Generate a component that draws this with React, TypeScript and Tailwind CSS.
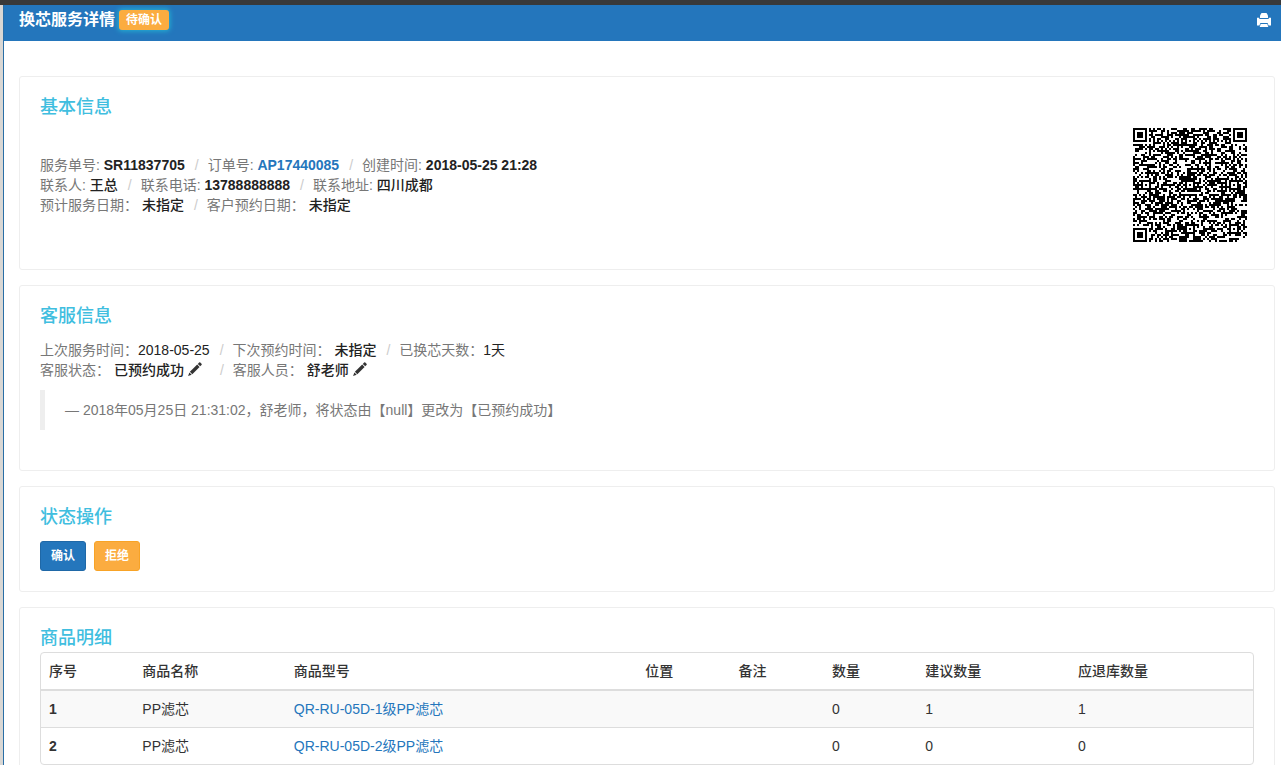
import type { ReactNode } from "react";

type Product = {
  id: number;
  name: string;
  model: string;
  position: string;
  remark: string;
  quantity: number;
  suggested: number;
  returned: number;
};

const products: Product[] = [
  { id: 1, name: "PP滤芯", model: "QR-RU-05D-1级PP滤芯", position: "", remark: "", quantity: 0, suggested: 1, returned: 1 },
  { id: 2, name: "PP滤芯", model: "QR-RU-05D-2级PP滤芯", position: "", remark: "", quantity: 0, suggested: 0, returned: 0 },
];

const columns = [
  { label: "序号", width: "w-[7.7%]" },
  { label: "商品名称", width: "w-[12.5%]" },
  { label: "商品型号", width: "w-[29%]" },
  { label: "位置", width: "w-[7.7%]" },
  { label: "备注", width: "w-[7.7%]" },
  { label: "数量", width: "w-[7.7%]" },
  { label: "建议数量", width: "w-[12.6%]" },
  { label: "应退库数量", width: "" },
];

// --- QR code -------------------------------------------------------

const QR_SIZE = 57;

// Square rings used by the finder and alignment marks
function ring(x: number, y: number, cx: number, cy: number) {
  return Math.max(Math.abs(x - cx), Math.abs(y - cy));
}

function buildQrPath() {
  const last = QR_SIZE - 4;
  const finders = [[3, 3], [last, 3], [3, last]];
  const aligns = [[28, 6], [6, 28], [28, 28], [50, 28], [28, 50], [50, 50]];
  let seed = 11837705;
  let path = "";

  for (let y = 0; y < QR_SIZE; y++) {
    for (let x = 0; x < QR_SIZE; x++) {
      seed ^= seed << 13;
      seed ^= seed >>> 17;
      seed ^= seed << 5;
      let dark = (seed >>> 0) % 100 < 52;
      if (x === 6 || y === 6) dark = (x + y) % 2 === 0;
      for (const [cx, cy] of aligns) {
        const r = ring(x, y, cx, cy);
        if (r <= 2) dark = r !== 1;
      }
      for (const [cx, cy] of finders) {
        const r = ring(x, y, cx, cy);
        if (r <= 4) dark = r !== 2 && r !== 4;
      }
      if (dark) path += `M${x} ${y}h1v1h-1z`;
    }
  }
  return path;
}

const qrPath = buildQrPath();

function QrCode() {
  return (
    <svg
      viewBox={`0 0 ${QR_SIZE} ${QR_SIZE}`}
      className="m-[7px] size-[114px]"
      shapeRendering="crispEdges"
      role="img"
      aria-label="二维码"
    >
      <path d={qrPath} fill="#000" />
    </svg>
  );
}

// --- Icons ---------------------------------------------------------

function PencilIcon() {
  return (
    <svg viewBox="0 0 14 14" className="inline-block size-3.5 align-[-1px]" fill="#333" aria-hidden="true">
      <path d="M11.1.6a.9.9 0 0 1 1.2 0l1.2 1.2a.9.9 0 0 1 0 1.2l-1.3 1.3-2.4-2.4z" />
      <path d="M9.2 2.5l2.4 2.4-7.3 7.3-2.4-2.4z" />
      <path d="M1.4 10.5l2.3 2.3L.1 14z" />
    </svg>
  );
}

function PrintIcon() {
  return (
    <svg viewBox="0 0 14 14" className="size-3.5" fill="#fff" aria-hidden="true">
      <path d="M4.500 0h5L11 2.500V5H3V2.500z" />
      <path d="M0 4.700h2.300V6h9.400V4.700H14V12.500h-2.400L10.600 10H3.400l-1 2.500H0z" />
      <path d="M3.700 11h6.600l1 3H2.700z" />
    </svg>
  );
}

// --- Building blocks -----------------------------------------------

function Card({ title, children }: { title: string; children: ReactNode }) {
  return (
    <section className="rounded-[3px] border border-[#eee] p-5">
      <h2 className="text-lg leading-5 font-medium text-[#40bedf]">{title}</h2>
      {children}
    </section>
  );
}

function Row({ children }: { children: ReactNode }) {
  return <ul className="flex flex-wrap text-[#777]">{children}</ul>;
}

function Item({ label, children }: { label: string; children: ReactNode }) {
  return (
    <li className="whitespace-pre before:pr-[9px] before:pl-2.5 before:text-[#ccc] before:content-['/'] first:before:content-none">
      {label}
      {children}
    </li>
  );
}

function Value({ bold = false, children }: { bold?: boolean; children: ReactNode }) {
  return <span className={bold ? "font-bold text-[#222]" : "font-medium text-[#222]"}>{children}</span>;
}

export default function App() {
  return (
    <div
      lang="zh-CN"
      className="flex min-h-screen border-t-[5px] border-[#393939] bg-[#d9d7d4] pl-[3px] font-['Liberation_Sans','Noto_Sans_CJK_SC',sans-serif] text-sm leading-5 text-[#333]"
    >
      <div className="min-w-0 flex-1 border-l border-[#2a6ea6] bg-white">
        <header className="flex h-9 items-start justify-between bg-[#2476bc] pr-2.5 pl-[15px]">
          <div className="flex items-center gap-1 pt-[5px]">
            <h1 className="text-base leading-5 font-bold text-white">换芯服务详情</h1>
            <span className="rounded-[3px] bg-[#fbac40] px-[7px] text-xs leading-5 font-bold text-white shadow-[0_0_5px_1px_#23b2d4]">
              待确认
            </span>
          </div>
          <button type="button" aria-label="打印" className="mt-2">
            <PrintIcon />
          </button>
        </header>

        <main className="flex flex-col gap-[15px] pt-[35px] pr-1.5 pl-[15px]">
          <section className="flex justify-between rounded-[3px] border border-[#eee] p-5">
            <div>
              <h2 className="text-lg leading-5 font-medium text-[#40bedf]">基本信息</h2>
              <div className="mt-[38px]">
                <Row>
                  <Item label="服务单号: "><Value bold>SR11837705</Value></Item>
                  <Item label="订单号: ">
                    <a href="#order" className="font-bold text-[#2476bc]">AP17440085</a>
                  </Item>
                  <Item label="创建时间: "><Value bold>2018-05-25 21:28</Value></Item>
                </Row>
                <Row>
                  <Item label="联系人: "><Value>王总</Value></Item>
                  <Item label="联系电话: "><Value bold>13788888888</Value></Item>
                  <Item label="联系地址: "><Value>四川成都</Value></Item>
                </Row>
                <Row>
                  <Item label="预计服务日期： "><Value>未指定</Value></Item>
                  <Item label="客户预约日期： "><Value>未指定</Value></Item>
                </Row>
              </div>
            </div>
            <div className="pt-6">
              <QrCode />
            </div>
          </section>

          <Card title="客服信息">
            <div className="mt-3.5">
              <Row>
                <Item label="上次服务时间："><span className="text-[#222]">2018-05-25</span></Item>
                <Item label="下次预约时间： "><Value>未指定</Value></Item>
                <Item label="已换芯天数："><span className="text-[#222]">1天</span></Item>
              </Row>
              <Row>
                <Item label="客服状态： ">
                  <Value>已预约成功</Value>
                  <button type="button" aria-label="修改客服状态" className="mr-2 ml-1"><PencilIcon /></button>
                </Item>
                <Item label="客服人员： ">
                  <Value>舒老师</Value>
                  <button type="button" aria-label="修改客服人员" className="ml-1"><PencilIcon /></button>
                </Item>
              </Row>
            </div>
            <blockquote className="mt-2.5 mb-5 border-l-[5px] border-[#eee] px-5 py-2.5 text-[#777]">
              — 2018年05月25日 21:31:02，舒老师，将状态由【null】更改为【已预约成功】
            </blockquote>
          </Card>

          <Card title="状态操作">
            <div className="mt-3.5 flex gap-2">
              <button type="button" className="rounded-[3px] border border-[#1f68a7] bg-[#2476bc] px-2.5 py-1 text-xs leading-5 font-bold text-white">
                确认
              </button>
              <button type="button" className="rounded-[3px] border border-[#f8a326] bg-[#fbac40] px-2.5 py-1 text-xs leading-5 font-bold text-white">
                拒绝
              </button>
            </div>
          </Card>

          <Card title="商品明细">
            <div className="mt-1 overflow-hidden rounded border border-[#ddd]">
              <table className="w-full table-fixed border-separate border-spacing-0 text-left">
                <thead>
                  <tr>
                    {columns.map((column) => (
                      <th key={column.label} className={`border-b-2 border-[#ddd] p-2 font-medium ${column.width}`}>
                        {column.label}
                      </th>
                    ))}
                  </tr>
                </thead>
                <tbody className="[&_td]:p-2 [&_th]:p-2 [&>tr:not(:first-child)>*]:border-t [&>tr:not(:first-child)>*]:border-[#ddd]">
                  {products.map((product) => (
                    <tr key={product.id} className="odd:bg-[#f9f9f9]">
                      <th className="font-bold">{product.id}</th>
                      <td>{product.name}</td>
                      <td><a href="#product" className="text-[#2476bc]">{product.model}</a></td>
                      <td>{product.position}</td>
                      <td>{product.remark}</td>
                      <td>{product.quantity}</td>
                      <td>{product.suggested}</td>
                      <td>{product.returned}</td>
                    </tr>
                  ))}
                </tbody>
              </table>
            </div>
          </Card>
        </main>
      </div>
    </div>
  );
}
